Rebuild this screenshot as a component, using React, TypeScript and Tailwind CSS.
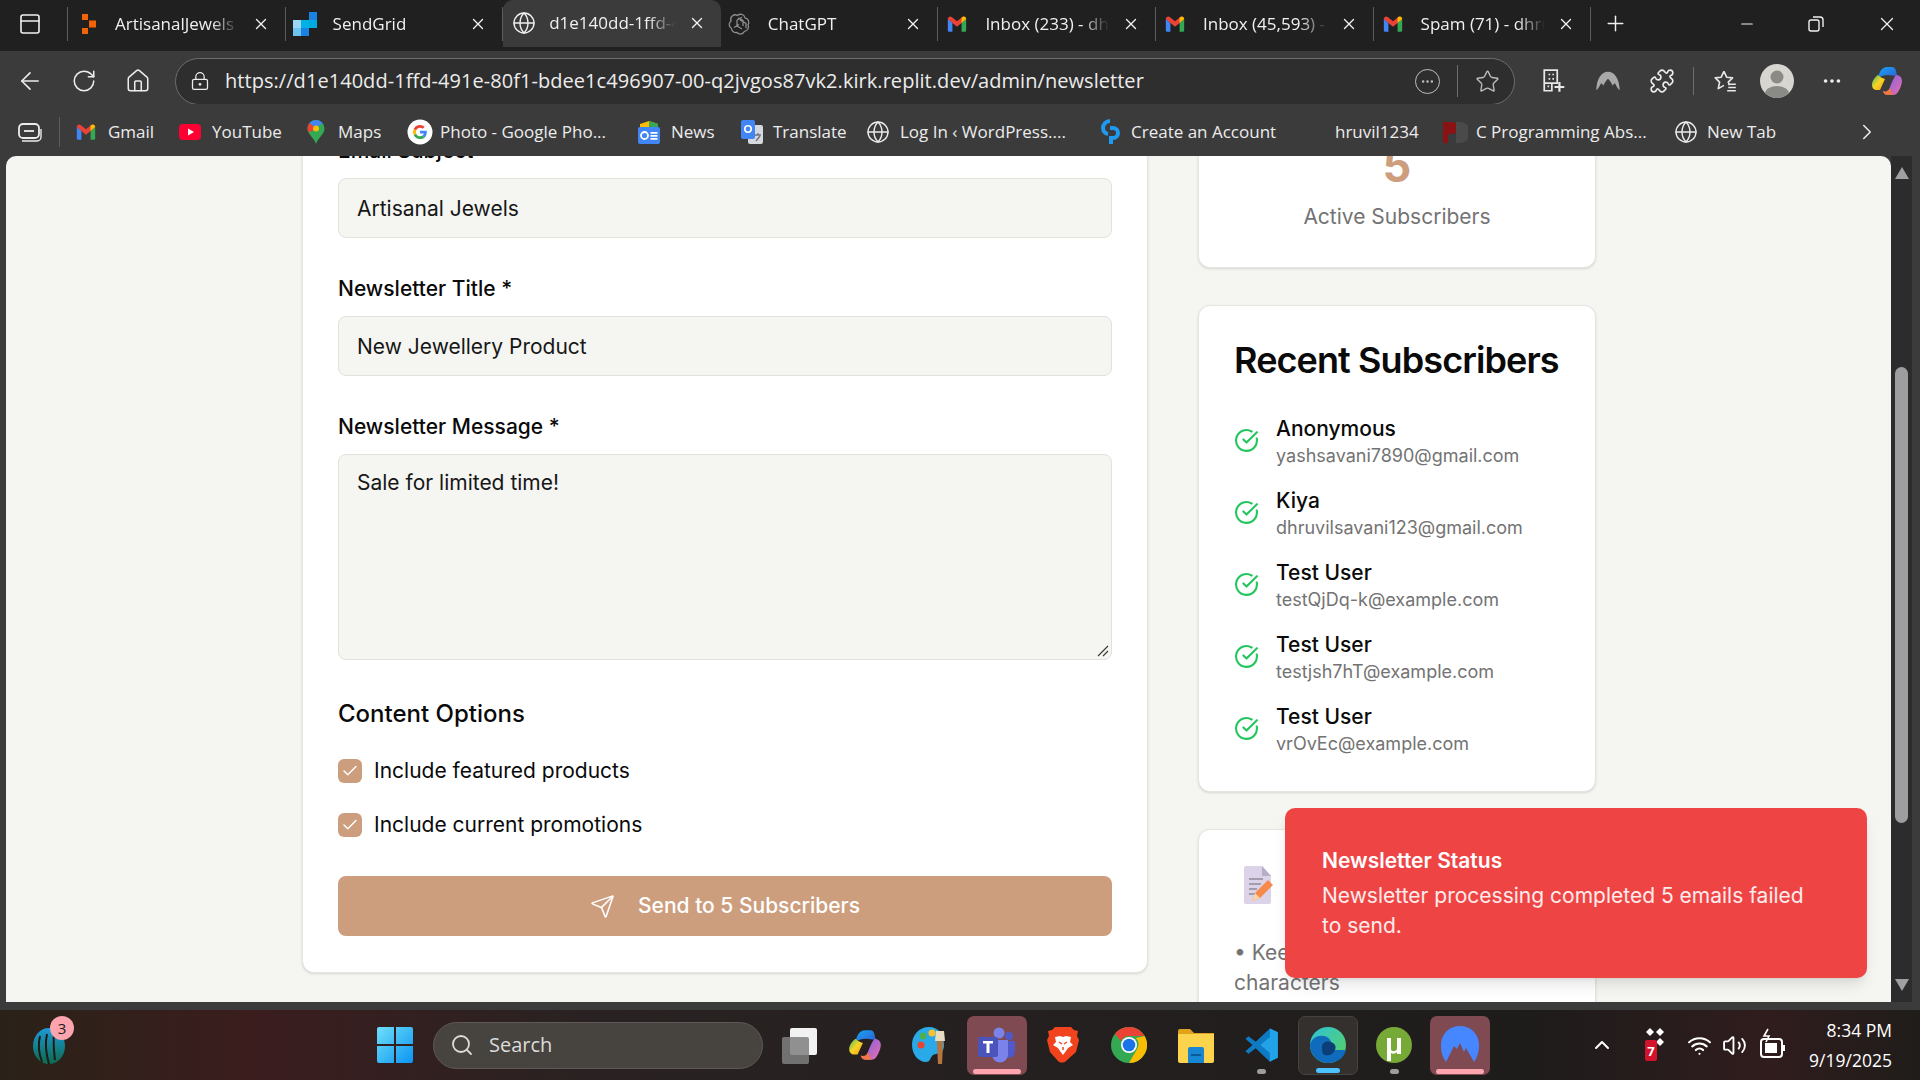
import {
  ArrowLeft, RotateCw, Home, LockKeyhole, Star, Puzzle, Ellipsis, X, Plus, Minus, Globe, ChevronRight,
  ChevronUp, Search, Send, Check, CircleCheckBig, Wifi, Volume2, PanelTop,
} from "lucide-react";
import type { ReactNode } from "react";

const UI = "font-['Open_Sans',sans-serif]";

/* ---------- favicons and app logos ---------- */

function GmailIcon({ size = 22 }: { size?: number }) {
  return (
    <svg width={size} height={size} viewBox="0 0 24 24" className="shrink-0">
      <path d="M2 6v13a1.500 1.500 0 0 0 1.500 1.500H7V11z" fill="#4285f4" />
      <path d="M22 6v13a1.500 1.500 0 0 1-1.500 1.500H17V11z" fill="#34a853" />
      <path d="M2 6.500C2 4 4.600 2.900 6.200 4.300L12 9l5.800-4.700C19.400 2.900 22 4 22 6.500L17 11l-5 4-5-4z" fill="#ea4335" />
      <path d="M17 11l5-4.500C22 4 19.400 2.900 17.800 4.300L17 5z" fill="#fbbc04" />
    </svg>
  );
}

function ReplitIcon() {
  return (
    <svg width="20" height="24" viewBox="0 0 20 24" className="ml-[6px] shrink-0">
      <path d="M2 2h6v6H2zM9 8.500h7v7H9zM2 16h6v6H2z" fill="#f26207" />
    </svg>
  );
}

function SendGridIcon() {
  return (
    <svg width="26" height="26" viewBox="0 0 26 26" className="shrink-0">
      <path d="M9 9h8v8H9z" fill="#00b2e3" />
      <path d="M17 1h8v8h-8z" fill="#1a82e2" />
      <path d="M17 9h8v8h-8z" fill="#00a9e0" />
      <path d="M1 9h8v8H1z" fill="#9dd6f5" />
      <path d="M1 17h8v8H1z" fill="#6fc4ef" />
      <path d="M9 17h8v8H9z" fill="#1a82e2" />
    </svg>
  );
}

function ChatGptIcon() {
  return (
    <svg width="24" height="24" viewBox="0 0 24 24" fill="none" stroke="#8d8d8d" strokeWidth="1.300" className="shrink-0">
      <path d="M9.500 3.500a4.500 4.500 0 0 1 7.500 2.300 4.500 4.500 0 0 1 3 7 4.500 4.500 0 0 1-3.500 6.500 4.500 4.500 0 0 1-7.500 1.200 4.500 4.500 0 0 1-5.500-4 4.500 4.500 0 0 1-.5-7.500 4.500 4.500 0 0 1 6.500-5.500z" />
      <path d="M9 8l5-2.800M9 8v6l5 3M14 9l4 2.300v5M15 14V8.500L10 6M6 15.500l5-3M12 8l5 3" />
    </svg>
  );
}

function GoogleIcon() {
  return (
    <svg width="26" height="26" viewBox="0 0 26 26" className="shrink-0">
      <circle cx="13" cy="13" r="12.500" fill="#fff" />
      <path d="M19.800 13.200c0-.5 0-1-.1-1.400H13v2.700h3.800a3.300 3.300 0 0 1-1.400 2.100l2.300 1.800c1.300-1.300 2.100-3 2.100-5.200z" fill="#4285f4" />
      <path d="M13 20c1.900 0 3.500-.6 4.700-1.600l-2.300-1.800c-.6.400-1.400.7-2.400.7-1.800 0-3.400-1.200-3.900-2.900L6.700 16.200C7.900 18.500 10.200 20 13 20z" fill="#34a853" />
      <path d="M9.100 14.400a4.200 4.200 0 0 1 0-2.800L6.700 9.800a7 7 0 0 0 0 6.400z" fill="#fbbc05" />
      <path d="M13 8.800c1 0 2 .4 2.700 1l2-2A7 7 0 0 0 6.700 9.800l2.400 1.800c.5-1.600 2.100-2.800 3.900-2.800z" fill="#ea4335" />
    </svg>
  );
}

function YoutubeIcon() {
  return (
    <svg width="24" height="24" viewBox="0 0 24 24" className="shrink-0">
      <rect x="1" y="4" width="22" height="16" rx="4" fill="#ff0033" />
      <path d="M10 8.500l6 3.500-6 3.500z" fill="#fff" />
    </svg>
  );
}

function MapsIcon() {
  return (
    <svg width="20" height="26" viewBox="0 0 20 26" className="shrink-0">
      <path d="M10 1a8.500 8.500 0 0 0-8.500 8.500C1.500 15 8 19 10 25c2-6 8.500-10 8.500-15.500A8.500 8.500 0 0 0 10 1z" fill="#34a853" />
      <path d="M10 1a8.500 8.500 0 0 0-6.500 3L10 9.500 16.500 4A8.500 8.500 0 0 0 10 1z" fill="#4285f4" />
      <path d="M3.500 4a8.500 8.500 0 0 0-2 5.500c0 1.500.5 2.800 1.200 4L10 9.500z" fill="#ea4335" />
      <circle cx="10" cy="9.500" r="3" fill="#fbbc04" />
    </svg>
  );
}

function NewsIcon() {
  return (
    <svg width="24" height="26" viewBox="0 0 24 26" className="shrink-0">
      <path d="M3 5l9-3 9 3v5H3z" fill="#fbbc04" />
      <path d="M12 2l9 3v5h-9z" fill="#34a853" />
      <rect x="1" y="8" width="22" height="17" rx="2" fill="#4285f4" />
      <path d="M13.500 13h7v1.800h-7zM13.500 16h7v1.800h-7zM13.500 19h7v1.800h-7z" fill="#fff" />
      <circle cx="7.500" cy="16.500" r="3.500" fill="none" stroke="#fff" strokeWidth="1.800" />
    </svg>
  );
}

function TranslateIcon() {
  return (
    <svg width="24" height="26" viewBox="0 0 24 26" className="shrink-0">
      <rect x="8" y="6" width="15" height="19" rx="2" fill="#d5d8dc" />
      <rect x="1" y="1" width="14" height="19" rx="2" fill="#4285f4" />
      <circle cx="8" cy="10" r="3.200" fill="none" stroke="#fff" strokeWidth="1.600" />
      <path d="M15 16h6M18 14v2M16 22l4-5" stroke="#6b7280" strokeWidth="1.300" fill="none" />
    </svg>
  );
}

function CreateIcon() {
  return (
    <svg width="22" height="28" viewBox="0 0 22 28" fill="none" stroke="#1e9bf0" strokeWidth="4" className="shrink-0">
      <path d="M11 3a7 7 0 0 0-7 7c0 3 2 5.500 5 6" />
      <path d="M11 10h3a5 5 0 0 1 0 10h-2v6" />
    </svg>
  );
}

function PdfIcon() {
  return (
    <svg width="26" height="26" viewBox="0 0 26 26" className="shrink-0">
      <path d="M1 3h9a6 6 0 0 1 0 12H6v9H1z" fill="#8b1212" />
      <path d="M14 3h4a8 8 0 0 1 0 21h-4z" fill="#4a4a4a" />
    </svg>
  );
}

function CollectionsIcon() {
  return (
    <svg width="26" height="26" viewBox="0 0 26 26" fill="none" stroke="#ececec" strokeWidth="1.800">
      <rect x="2" y="5" width="20" height="14" rx="4" />
      <path d="M7 12h10" />
      <path d="M5 22h15a4 4 0 0 0 4-4V10" strokeWidth="1.400" />
    </svg>
  );
}

function ExtensionGridIcon() {
  return (
    <svg width="26" height="26" viewBox="0 0 24 24" fill="none" stroke="#e8e8e8" strokeWidth="1.600">
      <path d="M3 2h12v12H3zM3 14h7v7H3z" />
      <path d="M7 6h1.500M10.500 6H12M7 10h1.500M10.500 10H12M6 17h1.500" />
      <path d="M17 13v9M12.500 17.500h9" strokeWidth="2" />
    </svg>
  );
}

function ArcIcon() {
  return (
    <svg width="28" height="28" viewBox="0 0 24 24">
      <path d="M2 20C2 10 6.500 4 12 4s10 6 10 16c-1.500-1-3-4-4-6-1 .5-1.500 1-2 2-1.500-3.500-3-5-4-6-1 1-2.500 2.500-4 6-.5-1-1-1.500-2-2-1 2-2.500 5-4 6z" fill="#a9a9a9" />
    </svg>
  );
}

function FavoritesIcon() {
  return (
    <svg width="26" height="26" viewBox="0 0 24 24" fill="none" stroke="#e8e8e8" strokeWidth="1.500" strokeLinejoin="round">
      <path d="M11 3l2.500 5.500 5.500.6-4 3.900 1 3M11 3L8.500 8.500 3 9.100l4 3.900-1.200 6 5.200-3" />
      <path d="M15 15h7M15 18h7M14 21h8" />
    </svg>
  );
}

function CopilotIcon({ size = 36, id = "cp" }: { size?: number; id?: string }) {
  return (
    <svg width={size} height={size} viewBox="0 0 36 36" className="shrink-0">
      <defs>
        <linearGradient id={`${id}a`} x1="0" y1="0" x2="1" y2="1">
          <stop offset="0" stopColor="#17a5ef" />
          <stop offset="1" stopColor="#2e5fd8" />
        </linearGradient>
        <linearGradient id={`${id}b`} x1="0" y1="0" x2="1" y2="1">
          <stop offset="0" stopColor="#7b61e8" />
          <stop offset="1" stopColor="#ee6fa8" />
        </linearGradient>
        <linearGradient id={`${id}c`} x1="0" y1="0" x2="1" y2="1">
          <stop offset="0" stopColor="#3fbf6a" />
          <stop offset="0.500" stopColor="#f9d423" />
          <stop offset="1" stopColor="#f59a23" />
        </linearGradient>
      </defs>
      <path d="M9 15c1-6 4-11 9-11h5c2 0 3.500 1.500 4 4l1 5-9-1c-4 0-7 1-10 3z" fill={`url(#${id}a)`} />
      <path d="M27 12c3 0 6 2 6 6 0 3-2 8-4 11-1 2-3 3-5 3h-6l3-8c2-5 3-8 6-12z" fill={`url(#${id}b)`} />
      <path d="M9 12c-3 2-6 6-6 10 0 3 2 5 5 5h3l5-11c-3-1-5-2-7-4z" fill={`url(#${id}c)`} />
      <path d="M14 28c3 1 5 0 7-3l3 7h-6c-2 0-4-2-4-4z" fill="#f0764a" />
    </svg>
  );
}

function AppLogoLeft() {
  return (
    <svg width="34" height="42" viewBox="0 0 34 42">
      <defs>
        <linearGradient id="lg" x1="0" y1="0" x2="0" y2="1">
          <stop offset="0" stopColor="#1c9ad8" />
          <stop offset="1" stopColor="#0d6a4e" />
        </linearGradient>
      </defs>
      <ellipse cx="17" cy="22" rx="16" ry="18" fill="url(#lg)" />
      <path d="M8 12c-2 8-1 18 2 26M15 10c-2 9-1 20 2 30M22 10c-1 9 0 18 1 26" stroke="#221a14" strokeWidth="2" fill="none" />
    </svg>
  );
}

function WindowsLogo() {
  return (
    <svg width="36" height="36" viewBox="0 0 36 36">
      <defs>
        <linearGradient id="wl" x1="0" y1="0" x2="1" y2="1">
          <stop offset="0" stopColor="#6fe0fb" />
          <stop offset="1" stopColor="#0a94f2" />
        </linearGradient>
      </defs>
      <path d="M0 2a2 2 0 0 1 2-2h15v17H0zM19 0h15a2 2 0 0 1 2 2v15H19zM0 19h17v17H2a2 2 0 0 1-2-2zM19 19h17v15a2 2 0 0 1-2 2H19z" fill="url(#wl)" />
    </svg>
  );
}

function TaskViewIcon() {
  return (
    <svg width="38" height="38" viewBox="0 0 38 38">
      <rect x="9" y="2" width="27" height="27" rx="2" fill="#f2f2f2" />
      <rect x="1" y="11" width="27" height="27" rx="2" fill="#7f7f7f" fillOpacity="0.850" />
    </svg>
  );
}

function PaintIcon() {
  return (
    <svg width="36" height="38" viewBox="0 0 36 38">
      <path d="M17 1C7 1 0 9 0 19c0 9 6 17 14 17 5 0 4-5 7-7 3-2 11 0 11-10C32 9 27 1 17 1z" fill="#29a9e8" />
      <circle cx="9" cy="19" r="3.500" fill="#e8452e" />
      <circle cx="11" cy="10" r="3.500" fill="#4caf50" />
      <circle cx="20" cy="7" r="3.500" fill="#fbc02d" />
      <path d="M25 14h6v4l-1 20h-4l-1-20z" fill="#b4753e" />
      <path d="M24 5h8l1 10h-10z" fill="#e8dcc0" />
    </svg>
  );
}

function TeamsIcon() {
  return (
    <svg width="38" height="36" viewBox="0 0 38 36">
      <circle cx="21" cy="6" r="5.500" fill="#7b83eb" />
      <circle cx="31" cy="9" r="4" fill="#5059c9" />
      <path d="M26 14h11v11a6 6 0 0 1-11 3z" fill="#5059c9" />
      <path d="M10 13h20v14a8 8 0 0 1-16 1z" fill="#7b83eb" />
      <rect x="0" y="10" width="20" height="20" rx="2" fill="#4b53bc" />
      <path d="M5 14h10v2.500h-3.500V26h-3v-9.500H5z" fill="#fff" />
    </svg>
  );
}

function BraveIcon() {
  return (
    <svg width="32" height="38" viewBox="0 0 32 38">
      <path d="M8 1h16l3 3 4 1-1 5 2 4-3 12-10 9c-2 2-6 2-8 0L3 26 0 14l2-4-1-5 4-1z" fill="#f1431e" />
      <path d="M8 11l5-1 3 1 3-1 5 1-1 5 3 3-5 3-2 3-3 4-3-4-2-3-5-3 3-3z" fill="#fff" />
      <path d="M12 16l3 2M20 16l-3 2M16 21v3" stroke="#f1431e" strokeWidth="1.500" />
    </svg>
  );
}

function ChromeIcon() {
  return (
    <svg width="36" height="36" viewBox="0 0 36 36">
      <circle cx="18" cy="18" r="18" fill="#34a853" />
      <path d="M18 0a18 18 0 0 1 15.600 9H18a9 9 0 0 0-8 5L3.800 7A18 18 0 0 1 18 0z" fill="#ea4335" />
      <path d="M33.600 9A18 18 0 0 1 18 36l7.800-13.500A9 9 0 0 0 25 11z" fill="#fbbc04" />
      <circle cx="18" cy="18" r="8" fill="#fff" />
      <circle cx="18" cy="18" r="6.300" fill="#1a73e8" />
    </svg>
  );
}

function FilesIcon() {
  return (
    <svg width="36" height="36" viewBox="0 0 36 36">
      <path d="M0 4a2 2 0 0 1 2-2h10l4 4h20v6H0z" fill="#e0a21a" />
      <path d="M0 7h36v27a2 2 0 0 1-2 2H2a2 2 0 0 1-2-2z" fill="#fcd34d" />
      <path d="M10 22a2 2 0 0 1 2-2h12a2 2 0 0 1 2 2v14H10z" fill="#1787d4" />
      <path d="M13 27h10v2H13z" fill="#0b5a97" />
    </svg>
  );
}

function VsCodeIcon() {
  return (
    <svg width="38" height="38" viewBox="0 0 24 24">
      <path d="M17 1.500l5 2.500v16l-5 2.500L8 14l-4.500 3.500L1.500 16l4.500-4-4.500-4 2-1.500L8 10z" fill="#0e7ac4" />
      <path d="M17 1.500l5 2.500v16l-5 2.500zM17 7l-6 5 6 5z" fill="#22a3e8" fillRule="evenodd" />
    </svg>
  );
}

function EdgeIcon() {
  return (
    <svg width="38" height="38" viewBox="0 0 38 38">
      <defs>
        <linearGradient id="ed" x1="0" y1="0" x2="1" y2="1">
          <stop offset="0" stopColor="#2ec4d8" />
          <stop offset="1" stopColor="#5dd05a" />
        </linearGradient>
      </defs>
      <circle cx="19" cy="19" r="18" fill="url(#ed)" />
      <path d="M1 19C3 10 12 8 18 11c5 3 6 9 2 13h17c-2 8-9 13-18 13C9 37 1 29 1 19z" fill="#0f6cbd" />
      <path d="M13 21c0-5 6-7 11-4 3 2 3 5 2 7-2 5-8 7-12 4-1-2-1-5-1-7z" fill="#0c3f78" />
    </svg>
  );
}

function TorrentIcon() {
  return (
    <svg width="36" height="38" viewBox="0 0 36 38">
      <circle cx="18" cy="19" r="18" fill="#76a936" />
      <path d="M11 12h4v11c0 3 5 3 6 0V12h4v16h-4v-2c-2 2-4 2-6 1v8h-4z" fill="#fff" />
    </svg>
  );
}

function NordIcon() {
  return (
    <svg width="38" height="40" viewBox="0 0 38 40">
      <path d="M5 37C1 31 0 26 0 20 0 9 8 1 19 1s19 8 19 19c0 6-1 11-5 17l-8-14-2 4-4-9-3 6-3-3z" fill="#4687ff" />
    </svg>
  );
}

function TrayDropIcon() {
  return (
    <svg width="26" height="36" viewBox="0 0 26 36">
      <path d="M6 1l4 4-4 4-4-4zM16 1l4 4-4 4-4-4zM16 11l4 4-4 4-4-4z" fill="#fff" />
      <rect x="1" y="13" width="12" height="21" rx="2" fill="#d3132c" />
      <text x="7" y="29" fontSize="13" fontWeight="700" fill="#fff" textAnchor="middle" fontFamily="Open Sans">7</text>
    </svg>
  );
}

function BatteryIcon() {
  return (
    <svg width="26" height="34" viewBox="0 0 26 34" fill="none" stroke="#fff" strokeWidth="2">
      <rect x="1" y="11" width="21" height="18" rx="3" />
      <path d="M24 17v6" />
      <path d="M5 25V15h12v10z" fill="#fff" stroke="none" />
      <path d="M8 1L4 8h5l-3 6" strokeWidth="1.600" />
    </svg>
  );
}

function DocEmoji() {
  return (
    <svg width="30" height="38" viewBox="0 0 30 38" className="ml-[9px]">
      <path d="M1 2a2 2 0 0 1 2-2h16l9 10v26a2 2 0 0 1-2 2H3a2 2 0 0 1-2-2z" fill="#dcd3e8" />
      <path d="M19 0l9 10h-9z" fill="#b7adc7" />
      <path d="M6 13h14M6 18h12M6 23h8M6 28h6" stroke="#8f8a99" strokeWidth="1.500" />
      <path d="M9 35l3-8L25 14l5 5-13 13z" fill="#f7894a" />
      <path d="M9 35l3-8 5 5z" fill="#f8d6a8" />
    </svg>
  );
}

/* ---------- browser chrome ---------- */

const TABS: { title: string; icon: ReactNode; active?: boolean }[] = [
  { title: "ArtisanalJewels", icon: <ReplitIcon /> },
  { title: "SendGrid", icon: <SendGridIcon /> },
  { title: "d1e140dd-1ffd-491e", icon: <Globe size={24} strokeWidth={1.4} className="shrink-0" />, active: true },
  { title: "ChatGPT", icon: <ChatGptIcon /> },
  { title: "Inbox (233) - dhruvil", icon: <GmailIcon /> },
  { title: "Inbox (45,593) - dhr", icon: <GmailIcon /> },
  { title: "Spam (71) - dhruvil", icon: <GmailIcon /> },
];

function Tab({ title, icon, active }: { title: string; icon: ReactNode; active?: boolean }) {
  return (
    <div
      className={
        active
          ? "flex h-full w-[217.600px] items-center rounded-t-[10px] bg-[#3b3b3b] pb-[5px] pl-[8px] pr-[15px] pt-[3px]"
          : "flex h-[34px] w-[217.600px] items-center border-r border-[#5c5c5c] pl-[6px] pr-[15px]"
      }
    >
      <span className="flex w-[26px] justify-center">{icon}</span>
      <span
        className={
          active
            ? "ml-[12px] w-[126px] overflow-hidden whitespace-nowrap text-[17px] [mask-image:linear-gradient(90deg,#000_78%,transparent_100%)]"
            : "ml-[15px] w-[124px] overflow-hidden whitespace-nowrap text-[17px] [mask-image:linear-gradient(90deg,#000_78%,transparent_100%)]"
        }
      >
        {title}
      </span>
      <X size={18} strokeWidth={1.8} className="ml-auto shrink-0" />
    </div>
  );
}

function TabBar() {
  return (
    <div className={`flex h-[51px] shrink-0 items-center bg-[#202020] pb-[4px] text-[#f0f0f0] ${UI}`}>
      <div className="flex h-[34px] w-[68px] items-center justify-start border-r border-[#5c5c5c] pl-[18px]">
        <PanelTop size={24} strokeWidth={1.6} />
      </div>
      {TABS.map((t) => (
        <Tab key={t.title} {...t} />
      ))}
      <Plus size={25} strokeWidth={1.4} className="ml-[12px]" />
      <div className="ml-auto flex items-center gap-[51px] pr-[22px]">
        <Minus size={18} strokeWidth={1.6} />
        <svg width="18" height="18" viewBox="0 0 18 18" fill="none" stroke="#f0f0f0" strokeWidth="1.400">
          <rect x="2" y="5" width="10" height="11" rx="2" />
          <path d="M6 2h7a3 3 0 0 1 3 3v7" />
        </svg>
        <X size={22} strokeWidth={1.4} />
      </div>
    </div>
  );
}

function Toolbar() {
  return (
    <div className={`flex h-[53px] shrink-0 items-center bg-[#3b3b3b] pt-[7px] text-[#ececec] ${UI}`}>
      <div className="flex w-[175px] items-center pl-[16px]">
        <ArrowLeft size={28} strokeWidth={1.4} />
        <RotateCw size={26} strokeWidth={1.4} className="ml-[27px]" />
        <Home size={26} strokeWidth={1.4} className="ml-[28px]" />
      </div>
      <div className="flex h-[47px] w-[1340px] items-center rounded-full border border-[#6d6d6d] bg-[#2e2e2e] pl-[14px] pr-[14px]">
        <LockKeyhole size={20} strokeWidth={1.5} className="shrink-0" />
        <span className="ml-[15px] whitespace-nowrap text-[20px] tracking-[0.05px]">
          https://d1e140dd-1ffd-491e-80f1-bdee1c496907-00-q2jvgos87vk2.kirk.replit.dev/admin/newsletter
        </span>
        <div className="ml-auto flex items-center">
          <span className="flex h-[25px] w-[25px] items-center justify-center rounded-full border border-[#bdbdbd] text-[#bdbdbd]">
            <Ellipsis size={15} />
          </span>
          <span className="mx-[17px] h-[32px] w-px bg-[#6d6d6d]" />
          <Star size={25} strokeWidth={1.3} className="text-[#bdbdbd]" />
        </div>
      </div>
      <div className="ml-[26px] flex flex-1 items-center pr-[12px]">
        <ExtensionGridIcon />
        <span className="ml-[27px]"><ArcIcon /></span>
        <Puzzle size={26} strokeWidth={1.5} className="ml-[27px]" />
        <span className="mx-[18px] h-[28px] w-px bg-[#6d6d6d]" />
        <FavoritesIcon />
        <span className="ml-[22px] flex h-[34px] w-[34px] items-end justify-center overflow-hidden rounded-full bg-[#d8d6d0]">
          <svg width="34" height="34" viewBox="0 0 34 34">
            <circle cx="17" cy="13" r="6.500" fill="#8a8a86" />
            <ellipse cx="17" cy="30" rx="12" ry="8" fill="#8a8a86" />
          </svg>
        </span>
        <Ellipsis size={22} className="ml-[27px]" />
        <span className="ml-[26px]"><CopilotIcon /></span>
      </div>
    </div>
  );
}

const BOOKMARKS: { w: string; gap: string; icon: ReactNode; label: string }[] = [
  { w: "w-[103px]", gap: "gap-[11px]", icon: <GmailIcon />, label: "Gmail" },
  { w: "w-[128px]", gap: "gap-[10px]", icon: <YoutubeIcon />, label: "YouTube" },
  { w: "w-[101px]", gap: "gap-[12px]", icon: <MapsIcon />, label: "Maps" },
  { w: "w-[230px]", gap: "gap-[7px]", icon: <GoogleIcon />, label: "Photo - Google Pho..." },
  { w: "w-[103px]", gap: "gap-[10px]", icon: <NewsIcon />, label: "News" },
  { w: "w-[126px]", gap: "gap-[9px]", icon: <TranslateIcon />, label: "Translate" },
  { w: "w-[233px]", gap: "gap-[10px]", icon: <Globe size={24} strokeWidth={1.4} className="shrink-0" />, label: "Log In ‹ WordPress...." },
  { w: "w-[217px]", gap: "gap-[10px]", icon: <CreateIcon />, label: "Create an Account" },
  { w: "w-[126px]", gap: "gap-[10px]", icon: <span className="w-[9px]" />, label: "hruvil1234" },
  { w: "w-[232px]", gap: "gap-[8px]", icon: <PdfIcon />, label: "C Programming Abs..." },
];

function BookmarksBar() {
  return (
    <div className={`flex h-[52px] shrink-0 items-center bg-[#3b3b3b] pt-[4px] text-[17px] text-[#ececec] ${UI}`}>
      <div className="flex h-[30px] w-[60px] items-center justify-center border-r border-[#5c5c5c]">
        <CollectionsIcon />
      </div>
      <div className="ml-[15px] flex items-center">
        {BOOKMARKS.map((b) => (
          <div key={b.label} className={`flex items-center whitespace-nowrap ${b.w} ${b.gap}`}>
            {b.icon}
            <span>{b.label}</span>
          </div>
        ))}
        <div className="flex items-center gap-[9px]">
          <Globe size={24} strokeWidth={1.4} />
          <span>New Tab</span>
        </div>
      </div>
      <ChevronRight size={26} strokeWidth={1.4} className="ml-auto mr-[40px]" />
    </div>
  );
}

/* ---------- page ---------- */

const CARD = "rounded-[12px] border border-[#e7e5df] bg-white shadow-sm";
const INPUT = "flex h-[60px] items-center rounded-[8px] border border-[#e2e1da] bg-[#f5f5f1] px-[18px] pt-[2px] text-[21px] text-[#171717]";
const LABEL = "block text-[21px] font-medium leading-[30px] text-[#0a0a0a]";

function Field({ label, value }: { label: string; value: string }) {
  return (
    <div>
      <label className={LABEL}>{label}</label>
      <div className={`mt-3 ${INPUT}`}>{value}</div>
    </div>
  );
}

function CheckRow({ label }: { label: string }) {
  return (
    <div className="flex h-[24px] items-center gap-[12px] text-[21px] text-[#0a0a0a]">
      <span className="flex h-[24px] w-[24px] items-center justify-center rounded-[6px] bg-[#cc9e7e] text-white">
        <Check size={18} strokeWidth={2} />
      </span>
      {label}
    </div>
  );
}

function NewsletterForm() {
  return (
    <div className={`w-[846px] shrink-0 px-[35px] pb-[36px] pt-[39px] ${CARD}`}>
      <div className="flex flex-col gap-[36px]">
        <Field label="Email Subject *" value="Artisanal Jewels" />
        <Field label="Newsletter Title *" value="New Jewellery Product" />
        <div>
          <label className={LABEL}>Newsletter Message *</label>
          <div className="relative mt-[12px] h-[206px] rounded-[8px] border border-[#e2e1da] bg-[#f5f5f1] px-[18px] pb-[12px] pt-[13px] text-[21px] leading-[30px] text-[#171717]">
            Sale for limited time!
            <svg width="12" height="12" viewBox="0 0 12 12" className="absolute bottom-[2px] right-[2px]" stroke="#3a3a3a" strokeWidth="1.200">
              <path d="M1 11L11 1M6 11l5-5" />
            </svg>
          </div>
        </div>
      </div>
      <h3 className="mt-[38px] text-[24px] font-medium leading-[32px] text-[#0a0a0a]">Content Options</h3>
      <div className="mt-[29px] flex flex-col gap-[30px]">
        <CheckRow label="Include featured products" />
        <CheckRow label="Include current promotions" />
      </div>
      <button className="mt-[39px] flex h-[60px] w-full items-center justify-center gap-[23px] rounded-[8px] bg-[#cc9e7e] text-[21px] font-medium text-white">
        <Send size={25} strokeWidth={1.5} />
        Send to 5 Subscribers
      </button>
    </div>
  );
}

const SUBSCRIBERS = [
  { name: "Anonymous", email: "yashsavani7890@gmail.com" },
  { name: "Kiya", email: "dhruvilsavani123@gmail.com" },
  { name: "Test User", email: "testQjDq-k@example.com" },
  { name: "Test User", email: "testjsh7hT@example.com" },
  { name: "Test User", email: "vrOvEc@example.com" },
];

function SideColumn() {
  return (
    <div className="flex w-[398px] shrink-0 flex-col gap-[37px]">
      <div className={`flex h-[172px] flex-col items-center justify-end pb-[35px] ${CARD}`}>
        <span className="text-[45px] font-bold leading-[56px] text-[#cc9e7e]">5</span>
        <span className="mt-[8px] text-[21px] leading-[30px] text-[#737373]">Active Subscribers</span>
      </div>
      <div className={`h-[487px] px-[35px] pt-[31px] ${CARD}`}>
        <h2 className="whitespace-nowrap text-[36px] font-semibold leading-[46px] tracking-[-0.9px] text-[#0a0a0a]">
          Recent Subscribers
        </h2>
        <ul className="mt-[27px] flex flex-col gap-[12px]">
          {SUBSCRIBERS.map((s) => (
            <li key={s.email + s.name} className="flex h-[60px] items-center gap-[17px]">
              <CircleCheckBig size={25} strokeWidth={2} className="shrink-0 text-[#22c55e]" />
              <div className="pt-[2px]">
                <div className="text-[21px] font-medium leading-[29px] text-[#0a0a0a]">{s.name}</div>
                <div className="text-[18px] leading-[26px] text-[#737373]">{s.email}</div>
              </div>
            </li>
          ))}
        </ul>
      </div>
      <div className={`h-[300px] px-[35px] pt-[36px] ${CARD}`}>
        <DocEmoji />
        <p className="mt-[34px] text-[21px] leading-[30px] text-[#737373]">• Keep subject lines under 50 characters</p>
      </div>
    </div>
  );
}

function Toast() {
  return (
    <div className="absolute bottom-[24px] right-[24px] flex h-[170px] w-[582px] flex-col justify-center rounded-[10px] bg-[#ef4444] pl-[37px] pr-[50px] text-[21px] text-white shadow-lg">
      <div className="font-semibold leading-[30px]">Newsletter Status</div>
      <div className="mt-[5px] leading-[30px] text-white/90">Newsletter processing completed 5 emails failed to send.</div>
    </div>
  );
}

function Scrollbar() {
  return (
    <div className="flex w-[21px] shrink-0 flex-col items-center bg-[#2c2c2c] py-[11px]">
      <span className="h-0 w-0 border-x-[7px] border-b-[12px] border-x-transparent border-b-[#a0a0a0]" />
      <span className="mt-[188px] h-[456px] w-[13px] rounded-full bg-[#9e9e9e]" />
      <span className="mt-auto h-0 w-0 border-x-[7px] border-t-[12px] border-x-transparent border-t-[#a0a0a0]" />
    </div>
  );
}

function Taskbar() {
  const apps = [
    { el: <TeamsIcon />, mark: "open-pink" },
    { el: <BraveIcon /> },
    { el: <ChromeIcon /> },
    { el: <FilesIcon /> },
    { el: <VsCodeIcon />, mark: "dot" },
    { el: <EdgeIcon />, mark: "active" },
    { el: <TorrentIcon />, mark: "dot" },
    { el: <NordIcon />, mark: "open-pink" },
  ];
  return (
    <div className={`flex h-[70px] shrink-0 items-center bg-[linear-gradient(90deg,#2a2218_0%,#3b1d1e_13%,#2a2222_30%,#221f1e_60%,#1e1c1b_80%,#301c1d_92%,#1f1d1a_100%)] text-white ${UI}`}>
      <div className="relative ml-[32px] flex w-[34px] items-center">
        <AppLogoLeft />
        <span className="absolute -right-[8px] -top-[8px] flex h-[24px] w-[24px] items-center justify-center rounded-full bg-[#fda4af] text-[15px] text-[#1a1a1a]">
          3
        </span>
      </div>
      <div className="ml-[311px]"><WindowsLogo /></div>
      <div className="ml-[20px] flex h-[47px] w-[330px] items-center gap-[15px] rounded-full border border-[#5e5956] bg-[#47433f] pl-[16px] text-[20px] text-[#dcdcdc]">
        <Search size={24} strokeWidth={1.8} />
        Search
      </div>
      <div className="ml-[18px]"><TaskViewIcon /></div>
      <div className="ml-[27px]"><CopilotIcon size={38} id="cq" /></div>
      <div className="ml-[28px]"><PaintIcon /></div>
      <div className="ml-[16px] flex items-center">
        {apps.map((a, i) => (
          <div key={i} className="flex w-[66.200px] justify-center">
            <div
              className={
                a.mark === "open-pink"
                  ? "relative flex h-[59px] w-[60px] items-center justify-center rounded-[7px] bg-[#7f4a52]"
                  : a.mark === "active"
                    ? "relative flex h-[59px] w-[60px] items-center justify-center rounded-[7px] border border-[#45423f] bg-[#33302e]"
                    : "relative flex h-[59px] w-[60px] items-center justify-center"
              }
            >
              {a.el}
              {a.mark === "open-pink" && <span className="absolute bottom-[1px] h-[5px] w-[48px] rounded-full bg-[#fda4af]" />}
              {a.mark === "active" && <span className="absolute bottom-[1px] h-[5px] w-[24px] rounded-full bg-[#4cc2ff]" />}
              {a.mark === "dot" && <span className="absolute bottom-[1px] h-[5px] w-[9px] rounded-full bg-[#9d9d9d]" />}
            </div>
          </div>
        ))}
      </div>
      <div className="ml-[96px] flex items-center">
        <ChevronUp size={24} strokeWidth={2} />
        <span className="ml-[30px]"><TrayDropIcon /></span>
        <Wifi size={25} strokeWidth={2} className="ml-[17px]" />
        <Volume2 size={25} strokeWidth={1.8} className="ml-[10px]" />
        <span className="ml-[13px]"><BatteryIcon /></span>
      </div>
      <div className="ml-auto pr-[28px] text-right text-[17.500px] leading-[30px]">
        <div>8:34 PM</div>
        <div>9/19/2025</div>
      </div>
    </div>
  );
}

export default function App() {
  return (
    <div className="flex h-screen w-full flex-col overflow-hidden bg-[#3b3b3b] font-['Inter',sans-serif]">
      <TabBar />
      <Toolbar />
      <BookmarksBar />
      <div className="flex h-[846px] shrink-0 pl-[6px] pr-[8px]">
        <div className="relative flex-1 overflow-hidden rounded-t-[10px] bg-[#f5f5f1]">
          <div className="-mt-[60px] flex items-start gap-[50px] pl-[296px]">
            <NewsletterForm />
            <SideColumn />
          </div>
          <Toast />
        </div>
        <Scrollbar />
      </div>
      <div className="h-[8px] shrink-0 bg-[#3b3b3b]" />
      <Taskbar />
    </div>
  );
}
